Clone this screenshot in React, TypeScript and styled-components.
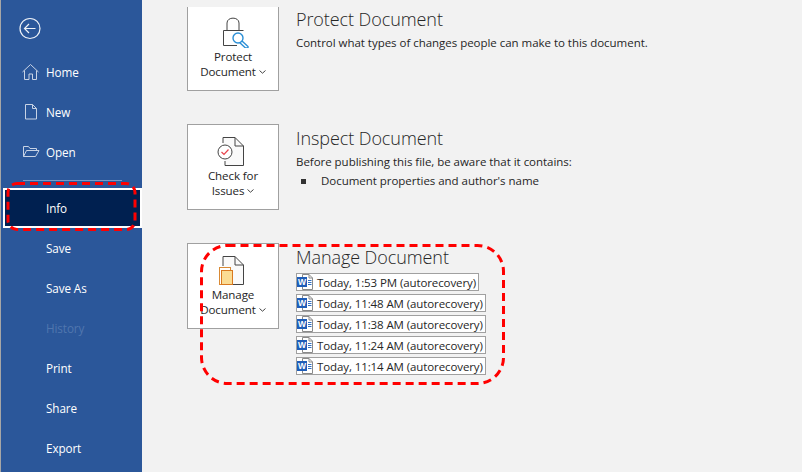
import styled, { createGlobalStyle } from "styled-components";

const Global = createGlobalStyle`
  html, body { margin: 0; padding: 0; height: 100%; overflow: hidden; background: #f2f2f2; }
  #root { height: 100%; }
`;

const Page = styled.div`
  position: relative;
  width: 802px;
  height: 472px;
  display: flex;
  overflow: hidden;
  font-family: "Open Sans", "Noto Sans", sans-serif;
  background: #f2f2f2;
`;

const Sidebar = styled.nav`
  width: 141px;
  height: 472px;
  margin-left: 1px;
  flex-shrink: 0;
  background: #2b579a;
  box-shadow: -1px 0 0 #a6a6a6;
  display: flex;
  flex-direction: column;
`;

const BackRow = styled.div`
  height: 52px;
  padding: 4px 0 0 17px;
  display: flex;
  align-items: center;
  box-sizing: border-box;
`;

const NavItem = styled.div<{ $active?: boolean; $disabled?: boolean }>`
  height: 40px;
  flex-shrink: 0;
  box-sizing: border-box;
  margin-left: ${p => (p.$active ? "2px" : "0")};
  padding-left: ${p => (p.$active ? "41px" : "45px")};
  display: flex;
  align-items: center;
  position: relative;
  font-size: 11.7px;
  letter-spacing: -0.1px;
  color: ${p => (p.$disabled ? "#5076ae" : "#ffffff")};
  background: ${p => (p.$active ? "#002050" : "transparent")};
  border: ${p => (p.$active ? "2px solid #ffffff" : "0")};
`;

const NavIcon = styled.span`
  position: absolute;
  left: 21px;
  top: 10px;
  width: 20px;
  height: 20px;
  display: block;
`;

const NavRule = styled.div`
  height: 1px;
  margin: 8px 20px 7px 22px;
  background: #7e9bc6;
  flex-shrink: 0;
`;

const Main = styled.main`
  flex: 1;
  padding: 7px 0 0 45px;
  display: flex;
  flex-direction: column;
  gap: 33px;
`;

const Section = styled.section`
  display: flex;
  gap: 17px;
  align-items: flex-start;
`;

const ActionCard = styled.div<{ $cut?: boolean; $h: number }>`
  width: 92px;
  height: ${p => p.$h}px;
  box-sizing: border-box;
  flex-shrink: 0;
  background: #ffffff;
  border: 1px solid #a0a0a0;
  border-top: ${p => (p.$cut ? "0" : "1px solid #a0a0a0")};
  display: flex;
  flex-direction: column;
  align-items: center;
  padding-top: ${p => (p.$cut ? "9px" : "12px")};
  font-size: 11.6px;
  line-height: 15px;
  letter-spacing: -0.12px;
  color: #262626;
  text-align: center;
`;

const CardIcon = styled.svg`
  display: block;
  flex-shrink: 0;
  margin-bottom: 1px;
`;

const Caret = styled.svg`
  margin-left: 3px;
  vertical-align: 2px;
`;

const Body = styled.div<{ $top: number }>`
  padding-top: ${p => p.$top}px;
  min-width: 0;
`;

const Title = styled.h2`
  margin: 0 0 4px;
  font-size: 18px;
  line-height: 24px;
  font-weight: 300;
  letter-spacing: -0.08px;
  color: #262626;
  white-space: nowrap;
`;

const Desc = styled.p`
  margin: 0;
  font-size: 11.5px;
  line-height: 16px;
  letter-spacing: -0.03px;
  color: #262626;
  white-space: nowrap;
`;

const Bullet = styled.div`
  display: flex;
  align-items: center;
  margin-top: 3px;
  padding-left: 5px;
  font-size: 11.5px;
  line-height: 16px;
  letter-spacing: -0.03px;
  color: #262626;
  white-space: nowrap;
`;

const Square = styled.span`
  width: 5px;
  height: 5px;
  background: #333333;
  margin-right: 15px;
`;

const Versions = styled.div`
  display: flex;
  flex-direction: column;
  align-items: flex-start;
  gap: 3px;
`;

const Version = styled.div`
  height: 18px;
  box-sizing: border-box;
  border: 1px solid #a0a0a0;
  background: #ffffff;
  display: flex;
  align-items: center;
  gap: 3px;
  padding-right: 2px;
  font-size: 11.5px;
  letter-spacing: -0.1px;
  color: #262626;
  white-space: nowrap;
`;

const Markup = styled.svg`
  position: absolute;
  left: 0;
  top: 0;
  pointer-events: none;
`;

const Chevron = () => (
  <Caret width="7" height="4" viewBox="0 0 7 4" fill="none" stroke="#444" strokeWidth="1">
    <path d="M0.5 0.5 L3.5 3.2 L6.5 0.5" />
  </Caret>
);

const WordFile = () => (
  <svg width="17" height="16" viewBox="0 0 17 16">
    <path d="M5.5 0.5 H12 L15.5 4 V15.5 H5.5 Z" fill="#fff" stroke="#8a8a8a" />
    <path d="M12 0.5 V4 H15.5" fill="none" stroke="#8a8a8a" />
    <rect x="0" y="3" width="10" height="10" fill="#1f5db8" />
    <text x="5" y="11" textAnchor="middle" fontSize="8.5" fontWeight="700" fill="#fff" fontFamily="Liberation Sans, sans-serif">W</text>
    <path d="M11 6.5 H14.5 M11 8.5 H14.5 M11 10.5 H14.5" stroke="#2f6fc4" />
  </svg>
);

const versions = [
  "Today, 1:53 PM (autorecovery)",
  "Today, 11:48 AM (autorecovery)",
  "Today, 11:38 AM (autorecovery)",
  "Today, 11:24 AM (autorecovery)",
  "Today, 11:14 AM (autorecovery)",
];

export default function App() {
  return (
    <Page>
      <Global />
      <Sidebar>
        <BackRow>
          <svg width="23" height="23" viewBox="0 0 23 23" fill="none" stroke="#eef2f8" strokeWidth="1.2">
            <circle cx="12" cy="11.5" r="10" />
            <path d="M17.5 11.5 H6.5 M11 7 L6.5 11.5 L11 16" />
          </svg>
        </BackRow>
        <NavItem>
          <NavIcon>
            <svg width="20" height="20" viewBox="0 0 20 20" fill="none" stroke="#c8d3e5" strokeWidth="1">
              <path d="M0.5 10 L8.5 2.5 L16.5 10 M2.5 8.5 V17.5 H7 V12 H10.5 V17.5 H14.5 V8.5" />
            </svg>
          </NavIcon>
          Home
        </NavItem>
        <NavItem>
          <NavIcon>
            <svg width="20" height="20" viewBox="0 0 20 20" fill="none" stroke="#c8d3e5" strokeWidth="1">
              <path d="M3.5 2.5 H10.5 L14.5 6.5 V17 H3.5 Z M10.5 2.5 V6.5 H14.5" />
            </svg>
          </NavIcon>
          New
        </NavItem>
        <NavItem>
          <NavIcon>
            <svg width="20" height="20" viewBox="0 0 20 20" fill="none" stroke="#c8d3e5" strokeWidth="1">
              <path d="M1.5 14.5 V4.5 H6.5 L8 6.5 H14.5 V8.5 M1.5 14.5 H13.5 L17 8.5 H4.5 L1.5 14.5" />
            </svg>
          </NavIcon>
          Open
        </NavItem>
        <NavRule />
        <NavItem $active>Info</NavItem>
        <NavItem>Save</NavItem>
        <NavItem>Save As</NavItem>
        <NavItem $disabled>History</NavItem>
        <NavItem>Print</NavItem>
        <NavItem>Share</NavItem>
        <NavItem>Export</NavItem>
      </Sidebar>

      <Main>
        <Section>
          <ActionCard $cut $h={84}>
            <CardIcon width="32" height="32" viewBox="0 0 32 32" fill="none">
              <path d="M10 14.5 V7 C10 0.5 22 0.5 22 7 V14.5" stroke="#444" />
              <path d="M26.5 14.5 H6.5 V29.5 H20" stroke="#444" />
              <path d="M25 25 L31 30.5 V32 H28.5 L22 26" stroke="#2b8fd6" strokeWidth="1.4" fill="#fff" />
              <circle cx="21" cy="22" r="5" stroke="#2b8fd6" strokeWidth="1.4" fill="#fff" />
            </CardIcon>
            <div>Protect</div>
            <div>Document<Chevron /></div>
          </ActionCard>
          <Body $top={0}>
            <Title>Protect Document</Title>
            <Desc>Control what types of changes people can make to this document.</Desc>
          </Body>
        </Section>

        <Section>
          <ActionCard $h={86}>
            <CardIcon width="32" height="30" viewBox="0 0 32 30" fill="none">
              <path d="M6 6 V0.5 H18 L26.5 9 V28.5 H8 V24" stroke="#444" fill="#fafafa" />
              <path d="M18 0.5 V9 H26.5" stroke="#444" />
              <circle cx="8" cy="15" r="7" stroke="#444" fill="#fff" />
              <path d="M4.5 15 L7 17.5 L11.5 12.5" stroke="#e8434c" strokeWidth="1.2" />
            </CardIcon>
            <div>Check for</div>
            <div>Issues<Chevron /></div>
          </ActionCard>
          <Body $top={2}>
            <Title>Inspect Document</Title>
            <Desc>Before publishing this file, be aware that it contains:</Desc>
            <Bullet><Square />Document properties and author's name</Bullet>
          </Body>
        </Section>

        <Section>
          <ActionCard $h={86}>
            <CardIcon width="32" height="30" viewBox="0 0 32 30" fill="none">
              <path d="M6 10 V0.5 H18 L26.5 9 V28.5 H16" stroke="#444" fill="#fafafa" />
              <path d="M18 0.5 V9 H26.5" stroke="#444" />
              <rect x="2.5" y="11.5" width="11" height="17" stroke="#d98a35" fill="#fff" />
              <rect x="4.5" y="14.5" width="11" height="14" stroke="#d9791f" fill="#fbdc94" />
            </CardIcon>
            <div>Manage</div>
            <div>Document<Chevron /></div>
          </ActionCard>
          <Body $top={2}>
            <Title>Manage Document</Title>
            <Versions>
              {versions.map(v => (
                <Version key={v}>
                  <WordFile />
                  {v}
                </Version>
              ))}
            </Versions>
          </Body>
        </Section>
      </Main>

      <Markup width="802" height="472" fill="none" stroke="#ff0000" strokeWidth="3" strokeDasharray="8 5">
        <rect x="8" y="183.5" width="127" height="46" rx="9" />
        <rect x="201.5" y="245.5" width="302" height="138" rx="26" />
      </Markup>
    </Page>
  );
}
